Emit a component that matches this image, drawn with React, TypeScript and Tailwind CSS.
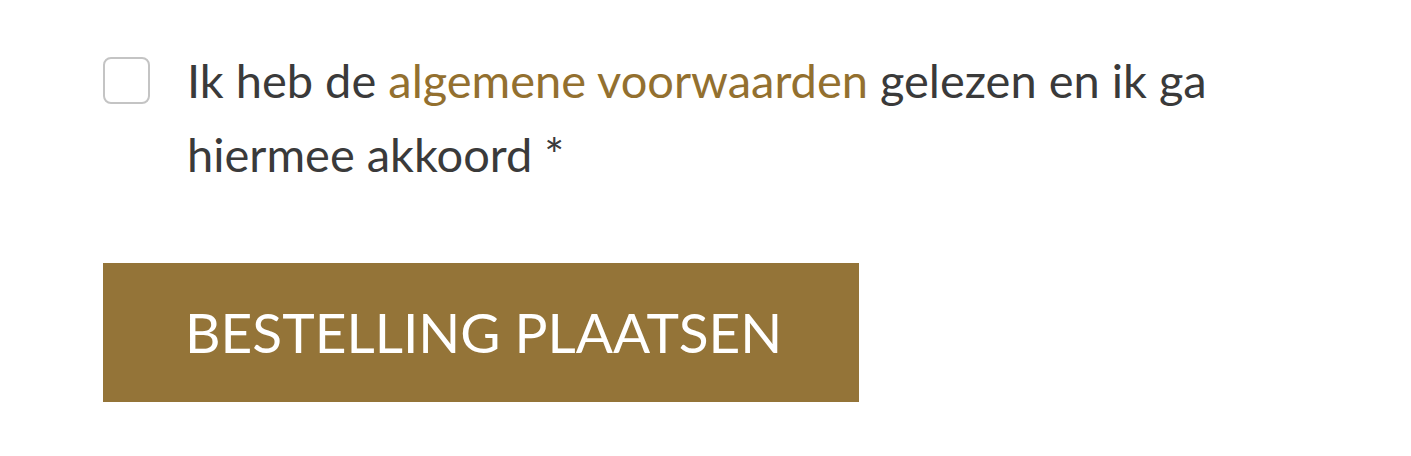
export default function App() {
  return (
    <div className="min-h-[456px] w-full bg-white font-['Lato',sans-serif]">
      <div className="pt-[57px] pl-[103px]">
        <label className="flex items-start gap-[37px]">
          <span className="h-[47px] w-[47px] shrink-0 rounded-[8px] border-2 border-[#c4c4c4] bg-white" />
          <span className="-mt-[14px] w-[1080px] text-[47px] leading-[74px] text-[#3a3a3a]">
            Ik heb de <a className="text-[#93702f]">algemene voorwaarden</a> gelezen en ik ga
            hiermee akkoord *
          </span>
        </label>
        <button className="mt-[72px] flex h-[139px] w-[756px] items-center bg-[#947438] pl-[82px] text-[55px] text-white">
          BESTELLING PLAATSEN
        </button>
      </div>
    </div>
  );
}
